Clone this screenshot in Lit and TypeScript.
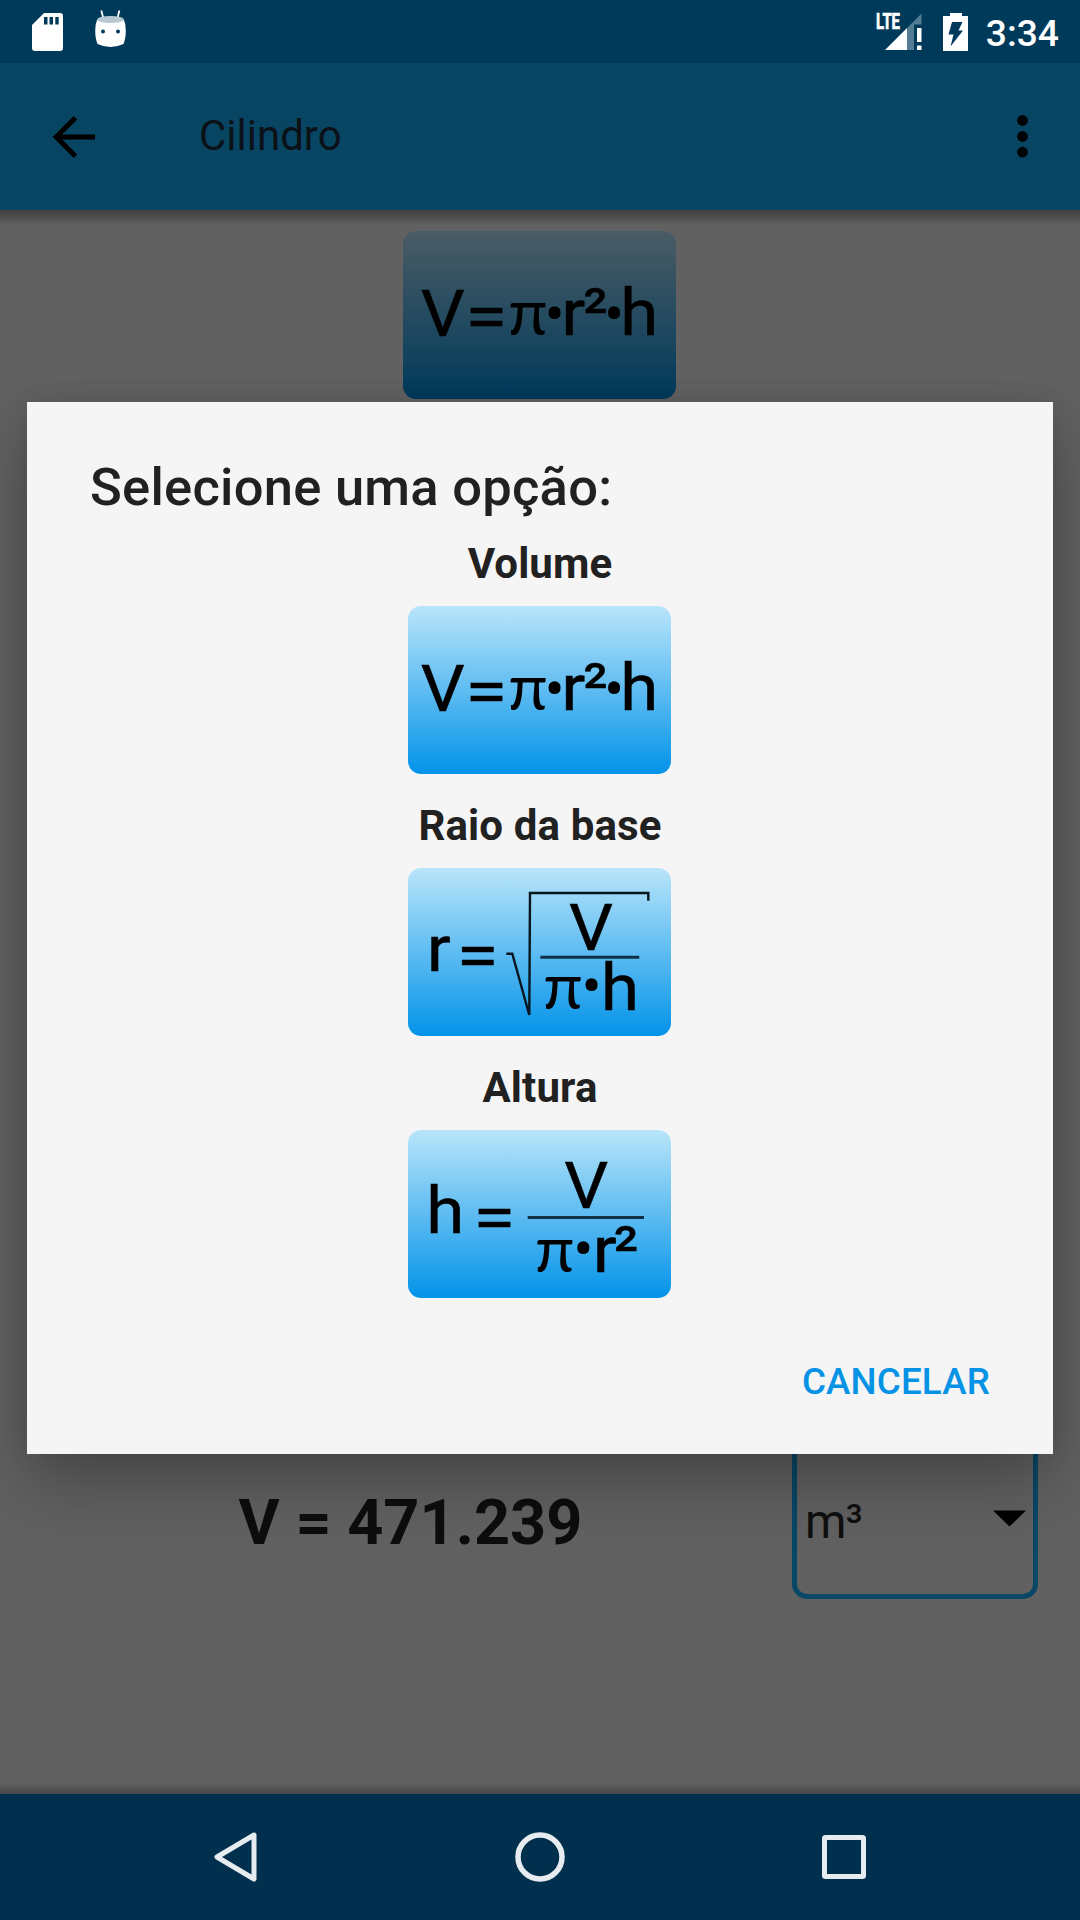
import { LitElement, html, css, svg } from "lit";
import { customElement, property } from "lit/decorators.js";

type Kind = "volume" | "radius" | "height";

// Glyph helpers: x is the pen position, y is the baseline.
const sans = (t: string, x: number, y: number, len: number) =>
  svg`<text class="sans" x=${x} y=${y} textLength=${len} lengthAdjust="spacingAndGlyphs">${t}</text>`;
const pi = (x: number, y: number) => svg`<text class="pi" x=${x - 1.2} y=${y}>π</text>`;
// The bullet is placed by its visual centre.
const dot = (x: number, y: number) => svg`<text class="dot" x=${x} y=${y + 22.6} text-anchor="middle">•</text>`;
const sq = (x: number, y: number) =>
  svg`<text class="sq" x=${x} y=${y} textLength="25" lengthAdjust="spacingAndGlyphs">²</text>`;

const formulas = {
  volume: svg`
    ${sans("V", 12.7, 104.5, 44)} ${sans("=", 57.3, 108, 42)} ${pi(101.5, 103.7)} ${dot(146.5, 81.5)}
    ${sans("r", 153.2, 104.3, 24)} ${sq(175, 103)} ${dot(206, 81.5)} ${sans("h", 212.3, 104.3, 38)}`,
  radius: svg`
    ${sans("r", 18.8, 103.3, 24)} ${sans("=", 48.4, 110, 42)}
    <path class="root" d="M98.3 85.7H104.3L121.3 147L122 25H240.3V32.7" />
    ${sans("V", 161, 82, 44)}
    <path class="bar" d="M132.3 89.2H231.3" />
    ${pi(136.5, 141.3)} ${dot(183.7, 116.7)} ${sans("h", 193, 142.3, 38)}`,
  height: svg`
    ${sans("h", 18.3, 103, 38)} ${sans("=", 65.2, 110, 42)}
    ${sans("V", 156.2, 78.2, 44)}
    <path class="bar" d="M119.7 87.5H236" />
    ${pi(128.2, 142)} ${dot(175.3, 117.3)} ${sans("r", 184.7, 142.3, 24)} ${sq(205.5, 141.5)}`,
};

@customElement("formula-tile")
export class FormulaTile extends LitElement {
  @property() kind: Kind = "volume";
  static styles = css`
    :host { display: flex; justify-content: center; width: 263px; height: 168px; border-radius: 13px;
      margin-right: 1px; background: linear-gradient(#b9e5fa, #0393e9); }
    :host([dimmed]) { width: 273px; background: linear-gradient(#4a5c65, #003a5c); }
    svg { display: block; width: 263px; height: 168px; }
    text { fill: #000; stroke: #000; stroke-width: 0.5; }
    .sans { font: 400 65px Roboto, sans-serif; }
    .pi { font: 400 64px Lato, sans-serif; stroke-width: 0; }
    .dot { font: 400 60px Roboto, sans-serif; stroke-width: 0; }
    .sq { font: 400 65px Roboto, sans-serif; stroke-width: 0.4; }
    .root { fill: none; stroke: #08171f; stroke-width: 2.4; }
    .bar { fill: none; stroke: #0e3145; stroke-width: 3; }
  `;
  render() {
    return html`<svg viewBox="0 0 263 168">${formulas[this.kind]}</svg>`;
  }
}

@customElement("option-dialog")
export class OptionDialog extends LitElement {
  static styles = css`
    :host { display: flex; flex-direction: column; box-sizing: border-box; width: 1026px; height: 1052px;
      padding: 54px 63px 51px; background: #f5f5f5; color: #212121; font-family: Roboto, sans-serif;
      box-shadow: 0 30px 60px rgba(0, 0, 0, 0.27), 0 0 24px rgba(0, 0, 0, 0.07); }
    h1 { margin: 0 0 21px; font-size: 52.5px; line-height: 62px; font-weight: 500; letter-spacing: 0.25px; }
    ul { list-style: none; margin: 0; padding: 0; display: flex; flex-direction: column; gap: 27px; }
    li { display: flex; flex-direction: column; align-items: center; gap: 18px; }
    .label { font-size: 42px; line-height: 49px; font-weight: 700; letter-spacing: 0.12px; }
    .actions { display: flex; justify-content: flex-end; margin-top: auto; }
    button { all: unset; font-size: 36.75px; line-height: 43px; font-weight: 500; letter-spacing: 0.15px; color: #0693e6; }
  `;
  render() {
    const options: [string, Kind][] = [["Volume", "volume"], ["Raio da base", "radius"], ["Altura", "height"]];
    return html`
      <h1>Selecione uma opção:</h1>
      <ul>
        ${options.map(([label, kind]) => html`<li>
          <span class="label">${label}</span><formula-tile .kind=${kind}></formula-tile>
        </li>`)}
      </ul>
      <div class="actions"><button>CANCELAR</button></div>`;
  }
}

@customElement("app-root")
export class AppRoot extends LitElement {
  static styles = css`
    :host { display: block; font-family: Roboto, sans-serif; }
    svg { display: block; flex: none; overflow: visible; }
    .screen { position: relative; display: flex; flex-direction: column; width: 1080px; height: 1920px;
      overflow: hidden; background: #616161; }
    .status { display: flex; align-items: center; height: 63px; box-sizing: border-box; padding: 0 21px 0 32px;
      background: #003a5a; color: #fff; }
    .sd { width: 31px; height: 38px; margin-top: 1px; }
    .droid { width: 31px; height: 36px; margin: 0 0 5px 32px; }
    .signal { width: 46px; height: 37px; margin: 0 21px 0 auto; }
    .battery { width: 26px; height: 38px; margin-right: 17px; }
    .lte { font: 700 21.5px Roboto, sans-serif; fill: #fff; stroke: #fff; stroke-width: 0.7; }
    .time { font-size: 37.2px; line-height: 43px; font-weight: 500; margin-top: 3px; }
    .toolbar { display: flex; align-items: center; height: 147px; box-sizing: border-box; padding: 0 52px;
      background: #074563; }
    .title { flex: 1; margin: 0 0 3px 104px; font-size: 42px; line-height: 49px; color: #0b1116; }
    .content { flex: 1; display: flex; flex-direction: column; align-items: center; justify-content: space-between;
      padding: 21px 0 195px;
      background: linear-gradient(rgba(0,0,0,.36), rgba(0,0,0,0)) top / 100% 15px no-repeat,
        linear-gradient(rgba(0,0,0,0), rgba(0,0,0,.26)) bottom / 100% 12px no-repeat; }
    .result { display: flex; align-items: center; align-self: stretch; padding: 0 42px 0 29px; }
    .value { flex: 1; text-align: center; font-size: 63px; line-height: 74px; font-weight: 700; color: #0d0d0d;
      padding-top: 32px; }
    .unit { display: flex; align-items: center; justify-content: space-between; width: 246px; height: 184px;
      box-sizing: border-box; border: 5px solid #084766; border-radius: 15px; padding: 30px 7px 0 8px;
      font-size: 47.25px; line-height: 55px; letter-spacing: -1px; color: #0f0f0f; }
    .caret { width: 33px; height: 17px; margin-bottom: 8px; }
    .nav { display: flex; justify-content: space-between; align-items: center; height: 126px;
      box-sizing: border-box; padding: 0 214px; background: #00304d; }
    .back { width: 43px; height: 50px; }
    .home { width: 50px; height: 50px; }
    .recent { width: 44px; height: 44px; }
    .outline { fill: none; stroke: #e6ecf0; stroke-linejoin: round; }
    option-dialog { position: absolute; left: 27px; top: 402px; }
  `;
  render() {
    return html`<div class="screen">
      <div class="status">
        <svg class="sd" viewBox="0 0 31 38">
          <path fill="#fff" fill-rule="evenodd" d="M12 0H28Q31 0 31 3V35Q31 38 28 38H3Q0 38 0 35V12Z
            M12 4V11.5H15.5V4Z M17.5 4V11.5H21V4Z M23.3 4V11.5H26.7V4Z" />
        </svg>
        <svg class="droid" viewBox="0 0 31 36">
          <path fill="none" stroke="#fff" stroke-width="1.8" d="M6.3 -.5L8.5 8M24.4 -.5L22.3 8" />
          <path fill="#fff" d="M2 9Q0 14 .2 20Q.3 28 2.5 33Q9 36 15.5 36Q22 36 28.5 33Q30.7 28 30.8 20Q31 14 29 9Q15.5 2 2 9Z" />
          <ellipse cx="15.5" cy="8.5" rx="13.3" ry="3.5" fill="#b8c8d2" />
          <circle cx="8" cy="20.6" r="2" fill="#003a5a" /><circle cx="23" cy="20.6" r="2" fill="#003a5a" />
        </svg>
        <svg class="signal" viewBox="0 0 46 37">
          <text class="lte" x="0" y="16.3" textLength="24" lengthAdjust="spacingAndGlyphs">LTE</text>
          <path fill="#fff" d="M9 37L31 15V37Z" />
          <path fill="#547d93" d="M31 15L45.5 .5V11.5H38V37H31Z" />
          <path fill="#fff" d="M41 15H45.5V29H41ZM41 32.5H45.5V37H41Z" />
        </svg>
        <svg class="battery" viewBox="0 0 26 38">
          <path fill="#fff" d="M7 0H19V3H25V38H0V3H7Z" />
          <path fill="#003a5a" d="M9 9H19.5L15.5 17.5H20L7.5 33.5L10.5 21.5H5.5Z" />
        </svg>
        <span class="time">3:34</span>
      </div>
      <div class="toolbar">
        <svg width="43" height="42" viewBox="0 0 43 42">
          <path fill="none" stroke="#000" stroke-width="5" d="M23.5 1.8L4.2 21L23.5 40.2M4 21H43" />
        </svg>
        <span class="title">Cilindro</span>
        <svg width="11" height="43" viewBox="0 0 11 43" fill="#020507">
          <circle cx="5.5" cy="5.5" r="5.4" /><circle cx="5.5" cy="21.5" r="5.4" /><circle cx="5.5" cy="37.2" r="5.4" />
        </svg>
      </div>
      <div class="content">
        <formula-tile dimmed></formula-tile>
        <div class="result">
          <div class="value">V = 471.239</div>
          <div class="unit"><span>m³</span>
            <svg class="caret" viewBox="0 0 33 17"><path d="M0 .5H33L16.5 16.5Z" /></svg>
          </div>
        </div>
      </div>
      <div class="nav">
        <svg class="back" viewBox="0 0 43 50"><path class="outline" stroke-width="5" d="M40 3L3 25L40 47Z" /></svg>
        <svg class="home" viewBox="0 0 50 50"><circle class="outline" stroke-width="5.5" cx="25" cy="25" r="22" /></svg>
        <svg class="recent" viewBox="0 0 44 44"><rect class="outline" stroke-width="5" x="2.5" y="2.5" width="39" height="39" rx="1" /></svg>
      </div>
      <option-dialog></option-dialog>
    </div>`;
  }
}
